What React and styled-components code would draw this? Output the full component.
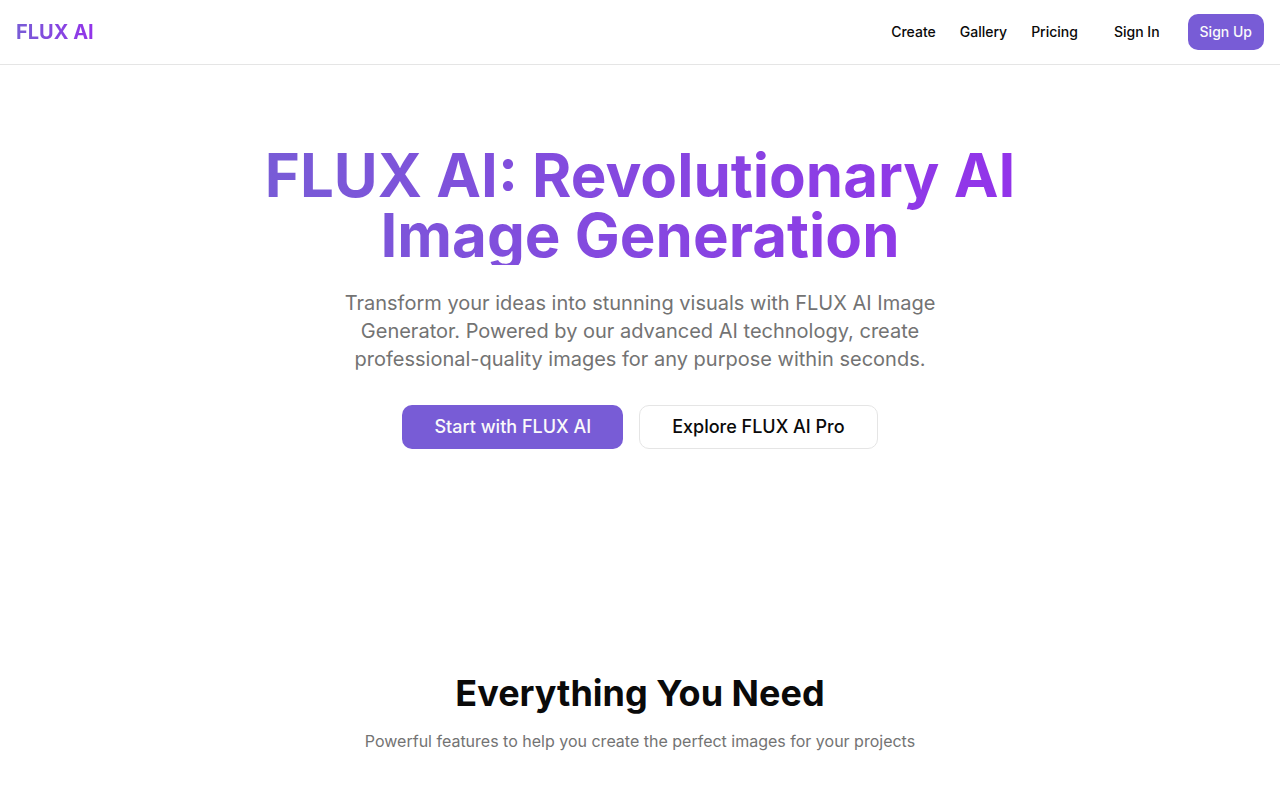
import styled, { createGlobalStyle, css } from "styled-components";

const GlobalStyle = createGlobalStyle`
  *,
  *::before,
  *::after {
    box-sizing: border-box;
    margin: 0;
    padding: 0;
  }

  :root {
    --color-primary: #785cd6;
    --color-accent: #9333ea;
    --color-text: #0a0a0a;
    --color-muted: #737373;
    --color-border: #e5e5e5;
  }

  body {
    font-family: Inter, sans-serif;
    font-size: 16px;
    line-height: 24px;
    color: var(--color-text);
    background-color: #fff;
    -webkit-font-smoothing: antialiased;
  }

  a {
    color: inherit;
    text-decoration: none;
  }
`;

const gradientText = css`
  color: transparent;
  background-image: linear-gradient(
    to right,
    var(--color-primary),
    var(--color-accent)
  );
  background-clip: text;
  -webkit-background-clip: text;
`;

const Header = styled.header`
  display: flex;
  align-items: center;
  justify-content: space-between;
  height: 65px;
  padding: 0 16px;
  border-bottom: 1px solid var(--color-border);
`;

const Logo = styled.a`
  font-size: 20px;
  line-height: 28px;
  font-weight: 700;

  span {
    ${gradientText}
  }
`;

const Nav = styled.nav`
  display: flex;
  align-items: center;
  gap: 24px;
`;

const NavLink = styled.a`
  font-size: 14px;
  line-height: 20px;
  font-weight: 500;
`;

const Actions = styled.div`
  display: flex;
  align-items: center;
  gap: 16px;
`;

const sizes = {
  small: css`
    height: 36px;
    padding: 0 12px;
    font-size: 14px;
    line-height: 20px;
  `,
  large: css`
    height: 44px;
    padding: 0 32px;
    font-size: 18px;
    line-height: 28px;
  `,
};

const variations = {
  primary: css`
    color: #fafafa;
    background-color: var(--color-primary);
  `,
  outline: css`
    color: var(--color-text);
    background-color: #fff;
    border: 1px solid var(--color-border);
  `,
  ghost: css`
    color: var(--color-text);
    background-color: transparent;
  `,
};

const Button = styled.button`
  border: none;
  border-radius: 10px;
  font-family: inherit;
  font-weight: 500;
  white-space: nowrap;
  cursor: pointer;
  ${(props) => sizes[props.$size]}
  ${(props) => variations[props.$variation]}
`;

const Hero = styled.section`
  display: flex;
  flex-direction: column;
  align-items: center;
  padding: 80px 16px;
  text-align: center;
`;

const Title = styled.h1`
  max-width: 768px;
  margin-bottom: 24px;
  font-size: 60px;
  line-height: 60px;
  font-weight: 700;
  ${gradientText}
`;

const Lead = styled.p`
  max-width: 600px;
  margin-bottom: 32px;
  font-size: 20px;
  line-height: 28px;
  color: var(--color-muted);
`;

const ButtonGroup = styled.div`
  display: flex;
  flex-wrap: wrap;
  justify-content: center;
  gap: 16px;
`;

const Features = styled.section`
  padding: 144px 16px 48px;
  text-align: center;
`;

const Heading = styled.h2`
  margin-bottom: 16px;
  font-size: 36px;
  line-height: 40px;
  font-weight: 700;
`;

const Description = styled.p`
  color: var(--color-muted);
`;

const navLinks = ["Create", "Gallery", "Pricing"];

function App() {
  return (
    <>
      <GlobalStyle />
      <Header>
        <Logo href="#">
          <span>FLUX AI</span>
        </Logo>
        <Nav>
          {navLinks.map((link) => (
            <NavLink href={`#${link.toLowerCase()}`} key={link}>
              {link}
            </NavLink>
          ))}
          <Actions>
            <Button $size="small" $variation="ghost">
              Sign In
            </Button>
            <Button $size="small" $variation="primary">
              Sign Up
            </Button>
          </Actions>
        </Nav>
      </Header>
      <main>
        <Hero>
          <Title>FLUX AI: Revolutionary AI Image Generation</Title>
          <Lead>
            Transform your ideas into stunning visuals with FLUX AI Image
            Generator. Powered by our advanced AI technology, create
            professional-quality images for any purpose within seconds.
          </Lead>
          <ButtonGroup>
            <Button $size="large" $variation="primary">
              Start with FLUX AI
            </Button>
            <Button $size="large" $variation="outline">
              Explore FLUX AI Pro
            </Button>
          </ButtonGroup>
        </Hero>
        <Features>
          <Heading>Everything You Need</Heading>
          <Description>
            Powerful features to help you create the perfect images for your
            projects
          </Description>
        </Features>
      </main>
    </>
  );
}

export default App;
